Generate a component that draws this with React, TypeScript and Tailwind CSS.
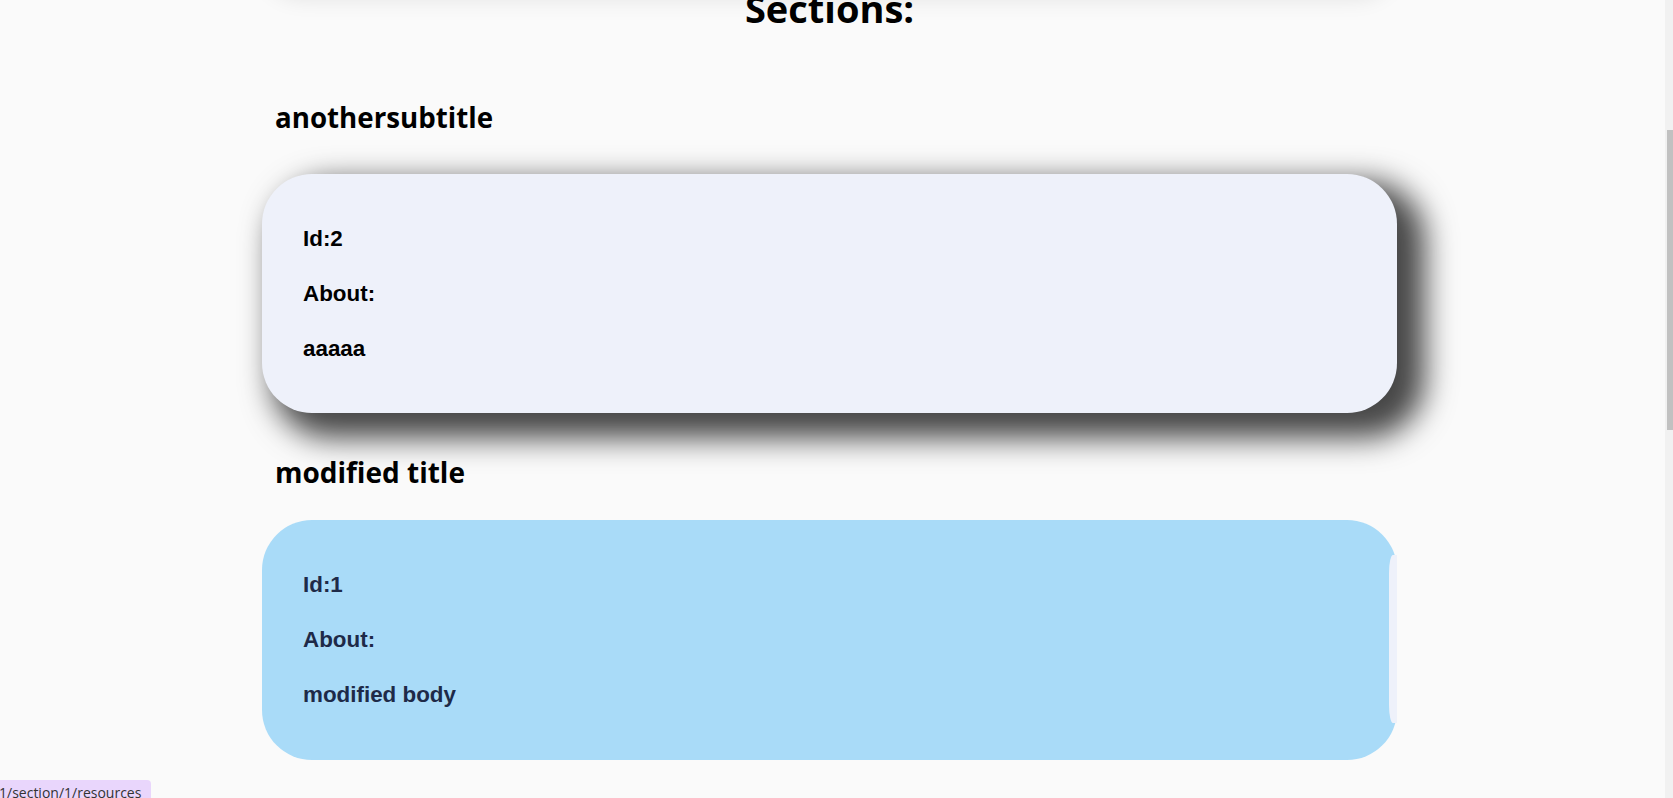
import React from "react";

const headingFont = { fontFamily: '"Open Sans", "Noto Sans", sans-serif' };

function Card({ id, about, body, variant }: { id: string; about: string; body: string; variant: "plain" | "hover" }) {
  const isHover = variant === "hover";
  return (
    <div
      className={
        isHover
          ? "relative rounded-[50px] bg-[#a9dbf8] px-[41px] py-[37px] h-[240px] text-[#1e2a48]"
          : "relative rounded-[50px] bg-[#eef1fa] px-[41px] py-[37px] h-[239px] text-black shadow-[19px_16px_30px_9px_rgba(0,0,0,0.72)]"
      }
      style={{ fontFamily: '"Liberation Sans", Arial, sans-serif' }}
    >
      <div className="text-[22.4px] font-bold leading-[55px]">Id:{id}</div>
      <div className="text-[22.4px] font-bold leading-[55px]">{about}</div>
      <div className="text-[22.4px] font-bold leading-[55px]">{body}</div>
      {isHover && (
        <div className="absolute right-0 top-[35px] bottom-[37px] w-[8px] bg-[#eef1fa] rounded-tl-[4px_18px] rounded-bl-[4px_18px]" />
      )}
    </div>
  );
}

export default function App() {
  return (
    <div className="relative flex h-[798px] w-full overflow-hidden bg-[#fafafa]">
      <main className="flex-1 min-w-0 pr-[6px]">
        <div className="mx-auto flex w-[1135px] flex-col">
          <div className="-mt-[110px] h-[100px] rounded-[40px] bg-[#fafafa] shadow-[0_8px_22px_rgba(0,0,0,0.10)]" />
          <h1
            className="-mt-[5px] h-[46px] text-center text-[38px] font-bold leading-[46px] text-black"
            style={headingFont}
          >
            Sections:
          </h1>
          <h2
            className="mt-[69px] h-[34px] pl-[13px] text-[27.7px] font-bold leading-[34px] text-black"
            style={headingFont}
          >
            anothersubtitle
          </h2>
          <div className="mt-[40px]">
            <Card id="2" about="About:" body="aaaaa" variant="plain" />
          </div>
          <h2
            className="mt-[42px] h-[34px] pl-[13px] text-[28px] font-bold leading-[34px] text-black"
            style={headingFont}
          >
            modified title
          </h2>
          <div className="mt-[31px]">
            <Card id="1" about="About:" body="modified body" variant="hover" />
          </div>
        </div>
      </main>
      <aside className="w-[8px] shrink-0 bg-[#f1f1f1] pl-[2px] pt-[130px]">
        <div className="h-[300px] w-[6px] bg-[#c1c1c1]" />
      </aside>
      <div
        className="absolute bottom-[-6px] left-[-3px] flex h-[24px] items-start rounded-tr-[4px] bg-[#e9d6fc] pl-[2px] pr-[10px] pt-[3px] text-[14px] leading-[20px] text-[#333333]"
        style={{ fontFamily: '"Open Sans", "Noto Sans", sans-serif' }}
      >
        1/section/1/resources
      </div>
    </div>
  );
}
